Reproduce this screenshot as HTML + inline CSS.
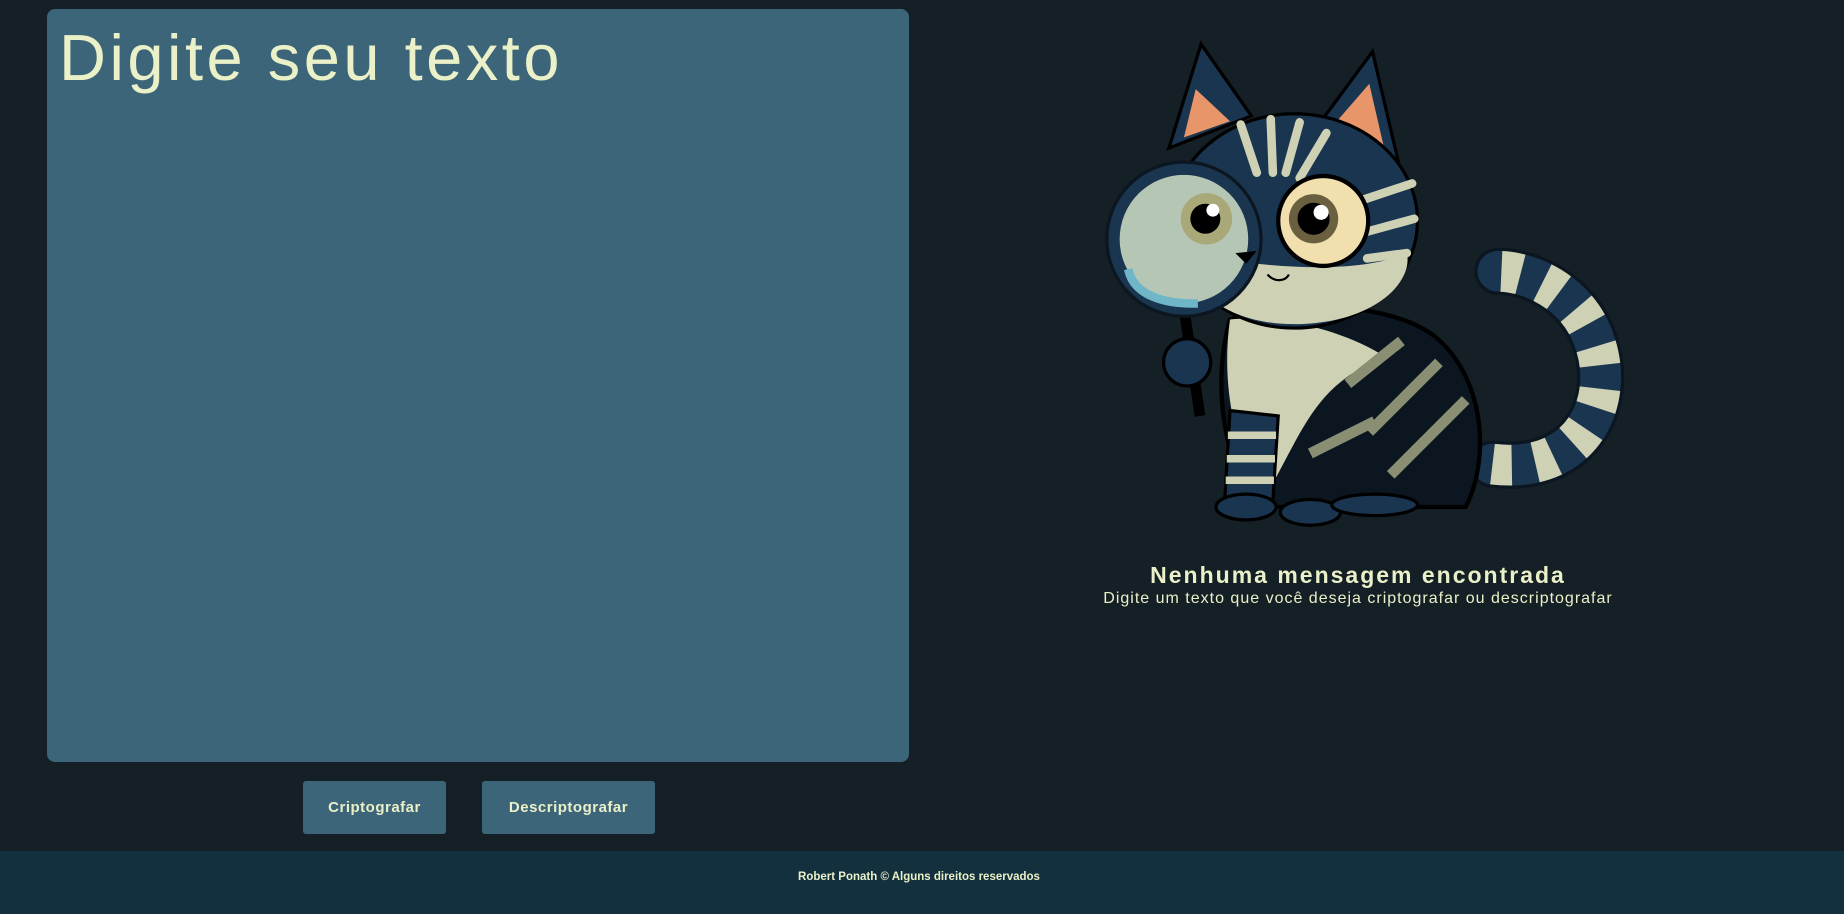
<!DOCTYPE html>
<html><head><meta charset="utf-8">
<style>
html,body{margin:0;padding:0;}
body{width:1844px;height:914px;background:#151f26;position:relative;overflow:hidden;font-family:"Liberation Sans",sans-serif;}
.ta{position:absolute;left:47px;top:9px;width:862px;height:753px;background:#3c6579;border-radius:8px;}
.ta span{position:absolute;left:12px;top:11px;font-size:65px;color:#eaf0c8;letter-spacing:3.5px;white-space:nowrap;}
.btn{position:absolute;top:781px;height:53px;background:#3c6579;border-radius:3px;color:#eaf0c8;font-weight:bold;font-size:15px;line-height:53px;text-align:center;letter-spacing:0.5px;}
.foot{position:absolute;left:0;top:851px;width:1844px;height:63px;background:#13303f;}
.foot span{position:absolute;left:0;width:1838px;top:20px;text-align:center;color:#eaf0c8;font-size:11.5px;font-weight:bold;}
.h{position:absolute;left:958px;width:800px;text-align:center;color:#eaf0c8;}
</style></head><body>
<div class="ta"><span>Digite seu texto</span></div>
<div class="btn" style="left:303px;width:143px;">Criptografar</div>
<div class="btn" style="left:482px;width:173px;">Descriptografar</div>
<div class="foot"><span>Robert Ponath © Alguns direitos reservados</span></div>
<div class="h" style="top:562px;font-size:23px;font-weight:bold;letter-spacing:2px;">Nenhuma mensagem encontrada</div>
<div class="h" style="top:590px;font-size:16px;letter-spacing:1px;">Digite um texto que você deseja criptografar ou descriptografar</div>

<svg style="position:absolute;left:1080px;top:30px" width="600" height="504" viewBox="0 0 560 470">
 <!-- tail -->
 <path d="M385 405 C470 415 500 345 480 290 C465 245 420 225 390 225" fill="none" stroke="#0b1621" stroke-width="44" stroke-linecap="round"/>
 <path d="M385 405 C470 415 500 345 480 290 C465 245 420 225 390 225" fill="none" stroke="#1a3550" stroke-width="38" stroke-linecap="round"/>
 <path d="M385 405 C470 415 500 345 480 290 C465 245 420 225 390 225" fill="none" stroke="#cfd1b5" stroke-width="38" stroke-dasharray="18 22"/>
 <!-- body -->
 <path d="M140 270 C120 340 140 420 170 445 L360 445 C385 395 375 320 330 285 C290 255 200 250 140 270Z" fill="#0b1621" stroke="#000" stroke-width="4"/>
 <path d="M140 270 C130 340 150 410 175 432 C210 370 220 330 285 305 C250 282 190 265 140 270Z" fill="#cfd1b5"/>
 <g stroke="#8a8e72" stroke-width="10" fill="none">
  <path d="M250 330 L300 290"/><path d="M270 375 L335 310"/><path d="M290 415 L360 345"/><path d="M215 395 L275 365"/>
 </g>
 <!-- legs -->
 <path d="M140 355 L135 440 L180 440 L185 360Z" fill="#1a3550" stroke="#000" stroke-width="3"/>
 <g stroke="#cfd1b5" stroke-width="7"><path d="M138 378 L183 378"/><path d="M137 400 L182 400"/><path d="M136 420 L181 420"/></g>
 <ellipse cx="155" cy="445" rx="28" ry="12" fill="#1a3550" stroke="#000" stroke-width="3"/>
 <ellipse cx="215" cy="450" rx="28" ry="12" fill="#1a3550" stroke="#000" stroke-width="3"/>
 <ellipse cx="275" cy="443" rx="40" ry="10" fill="#1a3550" stroke="#000" stroke-width="3"/>
 <!-- ears -->
 <path d="M83 110 L113 13 L160 80Z" fill="#1a3550" stroke="#000" stroke-width="3"/>
 <path d="M97 100 L108 55 L140 85Z" fill="#e8956a"/>
 <path d="M225 85 L273 20 L300 135Z" fill="#1a3550" stroke="#000" stroke-width="3"/>
 <path d="M238 87 L270 50 L285 115Z" fill="#e8956a"/>
 <!-- head -->
 <ellipse cx="200" cy="178" rx="115" ry="100" fill="#1a3550" stroke="#000" stroke-width="3"/>
 <path d="M95 208 C110 268 180 283 240 270 C290 258 310 228 305 208 C260 228 180 223 95 208Z" fill="#cfd1b5"/>
 <g stroke="#cfd1b5" stroke-width="8" fill="none" stroke-linecap="round">
  <path d="M150 88 L165 133"/><path d="M178 83 L180 133"/><path d="M205 86 L192 133"/><path d="M230 96 L205 138"/>
  <path d="M265 158 L310 143"/><path d="M268 188 L312 176"/><path d="M268 213 L305 208"/>
 </g>
 <!-- right eye -->
 <circle cx="227" cy="178" r="42" fill="#f2dfae" stroke="#000" stroke-width="4"/>
 <circle cx="218" cy="176" r="23" fill="#6a6040"/>
 <circle cx="218" cy="176" r="15" fill="#000"/>
 <circle cx="225" cy="170" r="7" fill="#fff"/>
 <path d="M175 228 C182 236 192 234 195 228" stroke="#000" stroke-width="2" fill="none"/>
 <!-- magnifier -->
 <path d="M98 266 L112 360" stroke="#000" stroke-width="10"/>
 <circle cx="97" cy="195" r="72" fill="#1a3550" stroke="#0b1621" stroke-width="3"/>
 <circle cx="97" cy="195" r="60" fill="#b6c6b4"/>
 <path d="M45 223 C50 248 80 256 110 255" stroke="#6fb6c8" stroke-width="8" fill="none"/>
 <circle cx="118" cy="176" r="24" fill="#a8a878"/>
 <circle cx="117" cy="176" r="14" fill="#000"/>
 <circle cx="124" cy="168" r="6" fill="#fff"/>
 <path d="M145 208 L165 206 L155 218Z" fill="#000"/>
 <!-- paw -->
 <ellipse cx="100" cy="310" rx="22" ry="22" fill="#1a3550" stroke="#000" stroke-width="3"/>
</svg>
</body></html>
